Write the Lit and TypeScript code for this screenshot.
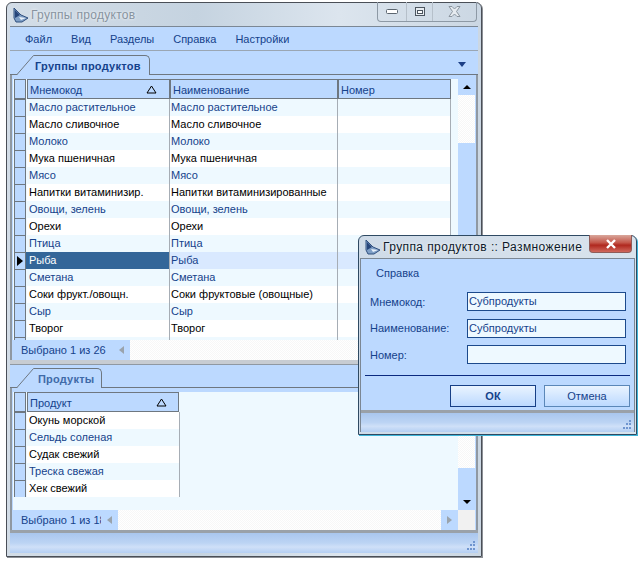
import { LitElement, html, css, svg } from 'lit';
import { customElement } from 'lit/decorators.js';

const GROUPS = [
  ['Масло растительное', 'Масло растительное'],
  ['Масло сливочное', 'Масло сливочное'],
  ['Молоко', 'Молоко'],
  ['Мука пшеничная', 'Мука пшеничная'],
  ['Мясо', 'Мясо'],
  ['Напитки витаминизир.', 'Напитки витаминизированные'],
  ['Овощи, зелень', 'Овощи, зелень'],
  ['Орехи', 'Орехи'],
  ['Птица', 'Птица'],
  ['Рыба', 'Рыба'],
  ['Сметана', 'Сметана'],
  ['Соки фрукт./овощн.', 'Соки фруктовые (овощные)'],
  ['Сыр', 'Сыр'],
  ['Творог', 'Творог'],
];
const PRODUCTS = ['Окунь морской', 'Сельдь соленая', 'Судак свежий', 'Треска свежая', 'Хек свежий'];

const logo = svg`<svg class="logo" width="16" height="16" viewBox="0 0 16 16">
  <path d="M1 1 L8 8 L15 11 L9 15 L3 15 L1 11 Z" fill="#7f9fc6" stroke="#31507f" stroke-width="1"/>
  <path d="M2 3 L7 8 L2 11 Z" fill="#26457a"/>
  <path d="M6 10 L13 11 L8 13 Z" fill="#e8f0fa"/>
</svg>`;

const grip = html`<svg class="grip" width="12" height="12" viewBox="0 0 12 12" fill="#6f95cf">
  <rect x="9" y="1" width="2" height="2"/><rect x="6" y="4" width="2" height="2"/><rect x="9" y="4" width="2" height="2"/>
  <rect x="3" y="8" width="2" height="2"/><rect x="6" y="8" width="2" height="2"/><rect x="9" y="8" width="2" height="2"/>
</svg>`;

const sortMark = html`<svg class="sort" width="11" height="9" viewBox="0 0 11 9"><path d="M5.5 1 L10 8 H1 Z" fill="none" stroke="#000" stroke-width="1"/></svg>`;

const slant = html`<svg class="slant" width="18" height="20" viewBox="0 0 18 20">
  <path d="M0 20 L17 0.5 H18 V20 Z" fill="#bcd9ff"/>
  <path d="M0 19.5 L16.5 0.5 H18" fill="none" stroke="#6e7780" stroke-width="1"/>
</svg>`;

@customElement('app-root')
export class AppRoot extends LitElement {
  static styles = css`
    :host {
      display: block;
      position: relative;
      width: 643px;
      height: 565px;
      overflow: hidden;
      background: #fff;
      font-family: "Liberation Sans", Arial, sans-serif;
      font-size: 11px;
      color: #15428b;
    }
    .win {
      position: absolute;
      box-sizing: border-box;
      display: flex;
      flex-direction: column;
      border: 1px solid #4a4f57;
      border-radius: 6px 6px 0 0;
      box-shadow: 1px 1px 0 #8c9096;
      background: linear-gradient(90deg, #d3dde7, #c5d3e0 40%, #dce5ee 70%, #cbd7e3);
    }
    .main { left: 6px; top: 2px; width: 476px; height: 555px; }
    .dialog {
      left: 358px; top: 235px; width: 279px; height: 200px;
      border-color: #2f4a63;
      box-shadow: 1px 1px 0 #3fb5d8;
      background: linear-gradient(90deg, #cfdbe8, #d9e3ec);
    }
    .title {
      display: flex;
      align-items: center;
      gap: 2px;
      height: 23px;
      padding-left: 6px;
      flex: none;
      font-size: 12px;
      text-shadow: 0 0 3px #fff;
    }
    .main .title { color: #87939f; letter-spacing: 0.3px; }
    .dialog .title { color: #0e1a2a; height: 22px; letter-spacing: 0.4px; }
    .ctl {
      margin-left: auto;
      margin-top: -1px;
      align-self: flex-start;
      display: flex;
      height: 19px;
      margin-right: 4px;
      border: 1px solid #8d99a5;
      border-top: 0;
      border-radius: 0 0 4px 4px;
    }
    .ctl span {
      width: 27px;
      display: flex;
      align-items: center;
      justify-content: center;
      border-right: 1px solid #b6c0ca;
    }
    .ctl span:first-child { width: 28px; }
    .ctl span:nth-child(2) { width: 25px; }
    .ctl span:last-child { width: 43px; border: 0; }
    .close {
      margin-left: auto;
      align-self: flex-start;
      margin-right: 4px;
      margin-top: -1px;
      width: 43px;
      height: 18px;
      border-radius: 0 0 4px 4px;
      background: linear-gradient(#d9a79c, #c4574a 45%, #b0291f 60%, #d0685c);
      border: 1px solid #8f5c58;
      border-top: 0;
      display: flex;
      align-items: center;
      justify-content: center;
      box-sizing: border-box;
    }
    .body {
      flex: 1;
      margin: 0 3px 3px;
      min-height: 0;
      display: flex;
      flex-direction: column;
      border-top: 1px solid #7b8794;
      background: #bcd9ff;
    }
    .menu {
      display: flex;
      height: 24px;
      box-sizing: border-box;
      align-items: center;
      gap: 19px;
      padding-left: 15px;
      flex: none;
      border-bottom: 1px solid #9aa6b3;
    }
    .strip {
      height: 24px;
      box-sizing: border-box;
      flex: none;
      display: flex;
      align-items: flex-end;
      border-bottom: 1px solid #6e7780;
      position: relative;
      background: #bcd9ff;
    }
    .strip.low { height: 23px; }
    .tab {
      position: relative;
      margin-left: 24px;
      margin-bottom: -1px;
      height: 20px;
      width: 116px;
      box-sizing: border-box;
      padding-left: 1px;
      display: flex;
      align-items: center;
      font-weight: 700;
      background: #bcd9ff;
      border: 1px solid #6e7780;
      border-left: 0;
      border-bottom: 0;
      border-radius: 0 5px 0 0;
      white-space: nowrap;
      letter-spacing: 0.25px;
    }
    .slant { position: absolute; left: -17px; top: -1px; }
    .tab.plain { width: 68px; padding-left: 4px; color: #3f6aa8; letter-spacing: 0.2px; }
    .arrow-menu {
      position: absolute;
      right: 12px;
      bottom: 7px;
      width: 0;
      border: 4px solid transparent;
      border-top: 5px solid #1c3f86;
      border-bottom: 0;
    }
    .pane {
      display: grid;
      grid-template-columns: 1fr 17px;
      grid-template-rows: 1fr 20px;
      min-height: 0;
      box-sizing: border-box;
      padding: 4px 1px 0;
      border-left: 2px solid #8f98a2;
      border-right: 2px solid #8f98a2;
    }
    .pane.top { height: 285px; flex: none; }
    .pane.bottom { flex: 1; }
    .grid { overflow: hidden; min-width: 0; background: #eef9ff; }
    .row { display: flex; height: 17px; }
    .head { height: 20px; }
    .ind {
      width: 12px;
      margin: 0 1px 0 1px;
      box-sizing: border-box;
      border: 1px solid #6e7780;
      border-bottom-width: 0;
      background: #bcd9ff;
      flex: none;
      display: flex;
      align-items: center;
      justify-content: center;
    }
    .head .ind { border-bottom-width: 1px; }
    .cell {
      box-sizing: border-box;
      width: 143px;
      padding-left: 2px;
      border-right: 1px solid #a6adb5;
      line-height: 17px;
      white-space: nowrap;
      overflow: hidden;
      color: #000;
      background: #fff;
      flex: none;
    }
    .cell.w2 { width: 168px; padding-left: 1px; }
    .cell.w3 { width: 113px; }
    .cell.first { margin-left: -1px; width: 144px; padding-left: 3px; }
    .alt .cell { background: #eef9ff; color: #15428b; }
    .sel .cell { background: #d9e9ff; color: #15428b; }
    .sel .cell.first { background: #336699; color: #fff; }
    .hcell {
      box-sizing: border-box;
      height: 20px;
      width: 143px;
      flex: none;
      border: 1px solid #6e7780;
      background: #bcd9ff;
      color: #15428b;
      display: flex;
      align-items: center;
      justify-content: space-between;
      padding: 1px 12px 0 2px;
    }
    .hcell.w2 { width: 168px; }
    .hcell.w3 { width: 113px; }
    .bottom .hcell { width: 152px; padding-right: 11px; }
    .bottom .cell { width: 153px; }
    .scroll {
      margin-top: -1px;
      background: repeating-conic-gradient(#f7f7f7 0 25%, #ffffff 0 50%) 0 0 / 2px 2px;
      display: flex;
      flex-direction: column;
      justify-content: space-between;
      position: relative;
    }
    .thumb { position: absolute; left: 0; right: 0; background: #bcd9ff; }
    .thumb.t1 { top: 65px; bottom: 0; }
    .thumb.t2 { top: 77px; bottom: 0; }
    .sbtn {
      height: 17px;
      background: #bcd9ff;
      display: flex;
      align-items: center;
      justify-content: center;
      position: relative;
    }
    .up { width: 0; border: 4px solid transparent; border-bottom: 4px solid #000; border-top: 0; }
    .down { width: 0; border: 4px solid transparent; border-top: 4px solid #000; border-bottom: 0; }
    .status {
      display: flex;
      background: repeating-conic-gradient(#f7f7f7 0 25%, #ffffff 0 50%) 0 0 / 2px 2px;
      align-items: stretch;
      justify-content: space-between;
    }
    .sel-count {
      box-sizing: border-box;
      width: 117px;
      background: #bcd9ff;
      display: flex;
      align-items: center;
      padding: 0 6px 0 8px;
      white-space: nowrap;
    }
    .sel-count.narrow { width: 105px; }
    .sel-count.narrow span { width: 80px; overflow: hidden; flex: none; }
    .sel-count b {
      margin-left: auto;
      width: 0;
      border: 4px solid transparent;
      border-right: 5px solid #9aa3ac;
      border-left: 0;
    }
    .right-btn {
      width: 17px;
      background: #bcd9ff;
      display: flex;
      align-items: center;
      justify-content: center;
    }
    .right-btn b {
      width: 0;
      border: 4px solid transparent;
      border-left: 5px solid #9aa3ac;
      border-right: 0;
    }
    .corner { background: #f1f1f1; }
    .divider {
      height: 5px;
      flex: none;
      background: #c7ccd2;
      border-bottom: 1px solid #8f98a2;
      box-sizing: border-box;
    }
    .foot {
      height: 23px;
      flex: none;
      border-top: 3px solid #9aa1a9;
      background: linear-gradient(#a9c6ee, #bcd4f4 50%, #cfe0f8 70%, #b4cff3);
      display: flex;
      align-items: flex-end;
      justify-content: flex-end;
      box-sizing: border-box;
      padding: 0 2px 1px 0;
    }
    .dialog .body {
      margin: 0 1px 2px;
      border-left: 1px solid #7b8794;
      border-right: 1px solid #7b8794;
      overflow: hidden;
    }
    .dialog .foot { height: 22px; margin-top: auto; }
    .dlg-menu { display: flex; align-items: center; padding-left: 15px; height: 27px; }
    .fields { padding-top: 6px; }
    .field {
      display: flex;
      align-items: center;
      height: 19px;
      margin-bottom: 7.5px;
      padding-left: 9px;
    }
    .field label { width: 97px; flex: none; }
    .field .inp {
      width: 159px;
      height: 19px;
      box-sizing: border-box;
      border: 1px solid #1c4a8c;
      background: #eef9ff;
      padding-left: 1px;
      line-height: 17px;
    }
    .rule { margin: 3px 4px 0; height: 1px; background: #0b2a80; }
    .btns { display: flex; justify-content: flex-end; gap: 8px; padding: 9px 4px 0 0; }
    .btn {
      width: 86px;
      height: 22px;
      box-sizing: border-box;
      border: 1px solid #5b87b8;
      background: linear-gradient(#eaf4ff, #bcd9ff);
      display: flex;
      align-items: center;
      justify-content: center;
    }
    .btn.def { border-color: #173f86; font-weight: 700; }
  `;

  private row(cells: string[], alt: boolean, selected: boolean, widths: string[], extra = true) {
    const cls = (selected ? 'sel ' : '') + (alt ? 'alt' : '');
    return html`<div class="row ${cls}">
      <div class="ind">${selected
        ? html`<svg width="6" height="10" viewBox="0 0 6 10"><path d="M0 0 L6 5 L0 10 Z" fill="#000"/></svg>`
        : ''}</div>
      ${cells.map((c, j) => html`<div class="cell ${widths[j]} ${selected && j === 0 ? 'first' : ''}">${c}</div>`)}
      ${extra ? html`<div class="cell w3"></div>` : ''}
    </div>`;
  }

  render() {
    return html`
      <div class="win main">
        <div class="title">
          ${logo}<span>Группы продуктов</span>
          <div class="ctl">
            <span><svg width="12" height="6"><rect x="0.5" y="0.5" width="11" height="4" rx="1" fill="#fff" stroke="#5c6670"/></svg></span>
            <span><svg width="10" height="9"><rect x="0.5" y="0.5" width="9" height="8" fill="#e8edf2" stroke="#4d5660"/><rect x="2.5" y="3.5" width="5" height="3" fill="#fff" stroke="#4d5660"/></svg></span>
            <span><svg width="13" height="11" viewBox="0 0 13 11"><path d="M1 0.5 H4 L6.5 3 L9 0.5 H12 L8.5 5.5 L12 10.5 H9 L6.5 8 L4 10.5 H1 L4.5 5.5 Z" fill="#e6ebf0" stroke="#8b959f"/></svg></span>
          </div>
        </div>
        <div class="body">
          <div class="menu">
            <span>Файл</span><span>Вид</span><span>Разделы</span><span>Справка</span><span>Настройки</span>
          </div>
          <div class="strip">
            <div class="tab">${slant}Группы продуктов</div>
            <div class="arrow-menu"></div>
          </div>
          <div class="pane top">
            <div class="grid">
              <div class="row head">
                <div class="ind"></div>
                <div class="hcell"><span>Мнемокод</span>${sortMark}</div>
                <div class="hcell w2"><span>Наименование</span></div>
                <div class="hcell w3"><span>Номер</span></div>
              </div>
              ${GROUPS.map((g, i) => this.row(g, i % 2 === 0, i === 9, ['', 'w2']))}
              <div class="row alt"><div class="ind"></div><div class="cell"></div><div class="cell w2"></div><div class="cell w3"></div></div>
            </div>
            <div class="scroll">
              <div class="sbtn"><div class="up"></div></div>
              <div class="thumb t1"></div>
            </div>
            <div class="status"><div class="sel-count"><span>Выбрано 1 из 26</span><b></b></div></div>
            <div class="corner"></div>
          </div>
          <div class="divider"></div>
          <div class="strip low">
            <div class="tab plain">${slant}Продукты</div>
          </div>
          <div class="pane bottom">
            <div class="grid">
              <div class="row head">
                <div class="ind"></div>
                <div class="hcell"><span>Продукт</span>${sortMark}</div>
              </div>
              ${PRODUCTS.map((p, i) => this.row([p], i % 2 === 1, false, [''], false))}
            </div>
            <div class="scroll">
              <div class="thumb t2"></div>
              <div></div>
              <div class="sbtn"><div class="down"></div></div>
            </div>
            <div class="status">
              <div class="sel-count narrow"><span>Выбрано 1 из 18</span><b></b></div>
              <div class="right-btn"><b></b></div>
            </div>
            <div class="corner"></div>
          </div>
          <div class="foot">${grip}</div>
        </div>
      </div>

      <div class="win dialog">
        <div class="title">
          ${logo}<span>Группа продуктов :: Размножение</span>
          <div class="close"><svg width="12" height="10" viewBox="0 0 12 10"><path d="M2 1 L10 9 M10 1 L2 9" stroke="#fff" stroke-width="2.4"/></svg></div>
        </div>
        <div class="body">
          <div class="dlg-menu">Справка</div>
          <div class="fields">
            <div class="field"><label>Мнемокод:</label><div class="inp">Субпродукты</div></div>
            <div class="field"><label>Наименование:</label><div class="inp">Субпродукты</div></div>
            <div class="field"><label>Номер:</label><div class="inp"></div></div>
          </div>
          <div class="rule"></div>
          <div class="btns">
            <div class="btn def">ОК</div>
            <div class="btn">Отмена</div>
          </div>
          <div class="foot">${grip}</div>
        </div>
      </div>
    `;
  }
}
